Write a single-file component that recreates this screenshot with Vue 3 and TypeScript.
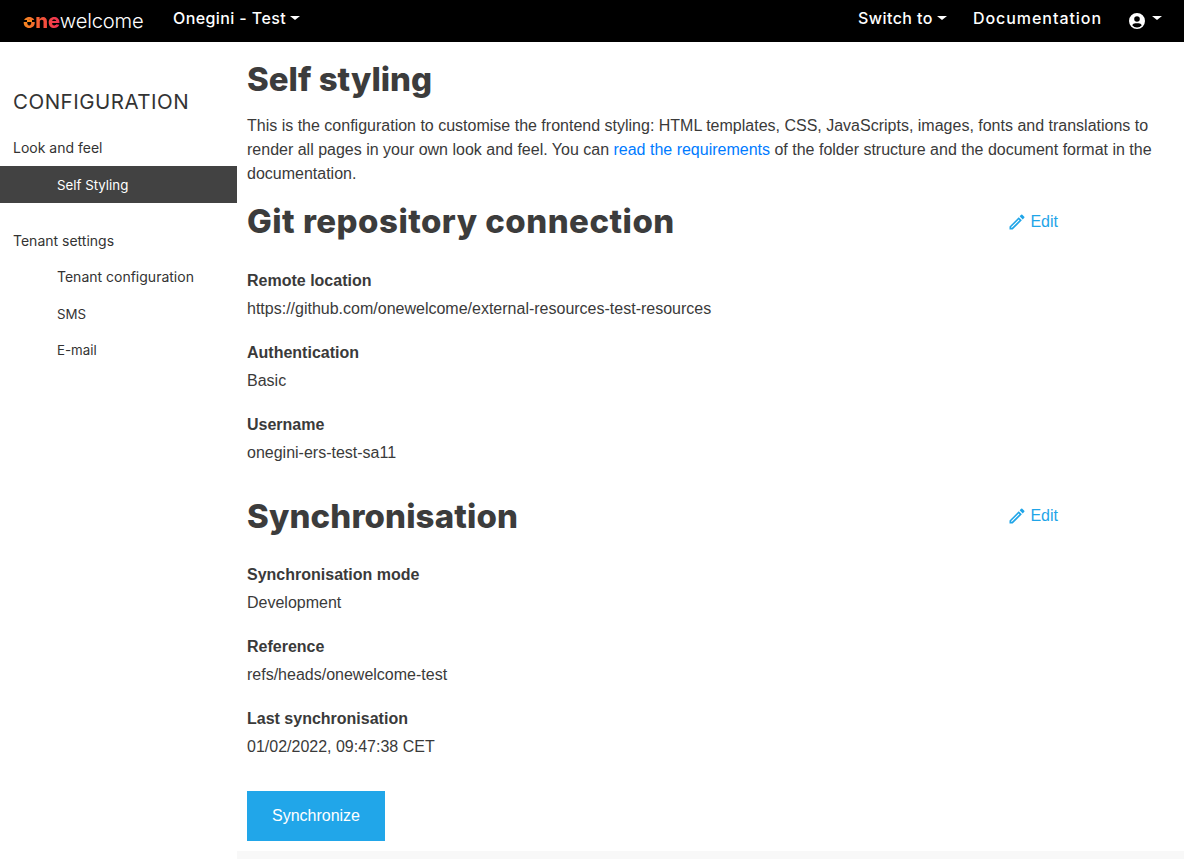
<script setup lang="ts">
interface Field { label: string; value: string }
const gitFields: Field[] = [
  { label: 'Remote location', value: 'https://github.com/onewelcome/external-resources-test-resources' },
  { label: 'Authentication', value: 'Basic' },
  { label: 'Username', value: 'onegini-ers-test-sa11' },
]
const syncFields: Field[] = [
  { label: 'Synchronisation mode', value: 'Development' },
  { label: 'Reference', value: 'refs/heads/onewelcome-test' },
  { label: 'Last synchronisation', value: '01/02/2022, 09:47:38 CET' },
]
</script>

<template>
  <div class="page">
    <header class="nav">
      <div class="brand"><span class="one">one</span><span class="welcome">welcome</span></div>
      <a class="nav-item tenant">Onegini - Test<i class="caret"></i></a>
      <div class="spacer"></div>
      <a class="nav-item switch">Switch to<i class="caret"></i></a>
      <a class="nav-item docs">Documentation</a>
      <a class="nav-item user">
        <svg class="avatar" width="18" height="18" viewBox="0 0 18 18" aria-hidden="true">
          <path fill="#fff" fill-rule="evenodd" d="M9 1a8 8 0 1 0 0 16A8 8 0 0 0 9 1Zm0 3.2a2.8 2.8 0 1 1 0 5.6 2.8 2.8 0 0 1 0-5.6Zm0 11.2a6.3 6.3 0 0 1-4.8-2.2c.6-1.2 1.8-2 3.2-2h3.2c1.4 0 2.6.8 3.2 2A6.3 6.3 0 0 1 9 15.4Z"/>
        </svg>
        <i class="caret"></i>
      </a>
    </header>

    <div class="body">
      <aside class="side">
        <div class="side-title">CONFIGURATION</div>
        <div class="group">Look and feel</div>
        <div class="item active">Self Styling</div>
        <div class="group second">Tenant settings</div>
        <div class="item wide">Tenant configuration</div>
        <div class="item">SMS</div>
        <div class="item">E-mail</div>
      </aside>

      <main class="main">
        <h1>Self styling</h1>
        <p class="intro">This is the configuration to customise the frontend styling: HTML templates, CSS, JavaScripts, images, fonts and translations to render all pages in your own look and feel. You can <a class="link">read the requirements</a> of the folder structure and the document format in the documentation.</p>

        <section class="head git">
          <h2>Git repository connection</h2>
          <a class="edit">
            <svg width="20" height="20" viewBox="0 0 24 24" aria-hidden="true"><path fill="#1fa5e8" d="M3 17.25V21h3.75L17.81 9.94l-3.75-3.75L3 17.25ZM5.92 19H5v-.92l9.06-9.06.92.92L5.92 19ZM20.71 7.04a1 1 0 0 0 0-1.41l-2.34-2.34a1 1 0 0 0-1.41 0l-1.83 1.83 3.75 3.75 1.83-1.83Z"/></svg>
            Edit
          </a>
        </section>
        <dl v-for="f in gitFields" :key="f.label" class="field">
          <dt>{{ f.label }}</dt>
          <dd>{{ f.value }}</dd>
        </dl>

        <section class="head sync">
          <h2>Synchronisation</h2>
          <a class="edit">
            <svg width="20" height="20" viewBox="0 0 24 24" aria-hidden="true"><path fill="#1fa5e8" d="M3 17.25V21h3.75L17.81 9.94l-3.75-3.75L3 17.25ZM5.92 19H5v-.92l9.06-9.06.92.92L5.92 19ZM20.71 7.04a1 1 0 0 0 0-1.41l-2.34-2.34a1 1 0 0 0-1.41 0l-1.83 1.83 3.75 3.75 1.83-1.83Z"/></svg>
            Edit
          </a>
        </section>
        <dl v-for="f in syncFields" :key="f.label" class="field">
          <dt>{{ f.label }}</dt>
          <dd>{{ f.value }}</dd>
        </dl>

        <button class="btn" type="button">Synchronize</button>
      </main>
    </div>
    <div class="foot"></div>
  </div>
</template>

<style>
html, body { margin: 0; background: #fff; }
</style>

<style scoped>
.page { height: 859px; overflow: hidden; display: flex; flex-direction: column; font-family: "Liberation Sans", Arial, sans-serif; color: #3a3a3a; }
.nav { height: 42px; background: #000; color: #fff; display: flex; align-items: center; padding: 0 22px 0 23px; font-family: Inter, sans-serif; font-size: 16px; font-weight: 500; flex: none; }
.brand { width: 150px; font-size: 20.2px; letter-spacing: -0.2px; white-space: nowrap; margin-bottom: 1px; }
.one { position: relative; font-weight: 800; background: linear-gradient(90deg, #f58a1f 0%, #f4513a 55%, #ef2f55 100%); -webkit-background-clip: text; background-clip: text; color: transparent; }
.one::before { content: ""; position: absolute; left: 0; top: 12px; width: 13px; height: 2px; background: #000; }
.one::after { content: ""; position: absolute; left: 4px; top: 12px; width: 5px; height: 2px; background: #f58a1f; }
.welcome { font-weight: 300; color: #fff; }
.spacer { flex: 1; }
.nav-item { display: flex; align-items: center; white-space: nowrap; margin-bottom: 6px; }
.tenant { letter-spacing: 0.4px; }
.switch { letter-spacing: 0.45px; }
.docs { margin-left: 26px; letter-spacing: 0.95px; }
.user { margin-left: 26px; }
.avatar { margin-top: 5px; }
.caret { display: inline-block; margin-left: 4px; border-top: 4px solid #fff; border-left: 5px solid transparent; border-right: 5px solid transparent; }
.user .caret { margin-left: 6px; }
.body { flex: 1; display: flex; min-height: 0; }
.side { width: 237px; flex: none; font-family: Inter, sans-serif; font-size: 14px; color: #333; padding-top: 47px; box-sizing: border-box; }
.side-title { font-size: 20.5px; font-weight: 400; letter-spacing: 0.5px; padding-left: 13px; line-height: 26px; margin-bottom: 14px; white-space: nowrap; }
.group { padding-left: 13px; height: 37px; line-height: 37px; }
.group.second { margin-top: 19px; }
.item { padding-left: 57px; height: 36.5px; line-height: 36.5px; font-size: 13.3px; }
.item.wide { font-size: 14px; }
.item.active { background: #424242; color: #fff; height: 37px; line-height: 38px; }
.main { flex: 1; padding-left: 10px; min-width: 0; }
h1, h2 { margin: 0; font-family: Inter, sans-serif; font-weight: 800; color: #3c3c3c; font-size: 33px; line-height: 40px; white-space: nowrap; }
h1 { padding-top: 17px; letter-spacing: 0; }
.intro { margin: 15px 0 0; font-size: 16px; line-height: 24px; width: 915px; }
.link { color: #007bff; }
.head { display: flex; align-items: center; justify-content: space-between; width: 811px; margin-top: 15px; margin-bottom: 26px; }
.head.git h2 { letter-spacing: 0.47px; }
.head.git .edit { margin-top: 2px; }
.head.sync { margin-top: 29px; margin-bottom: 25px; }
.head.sync h2 { letter-spacing: 0.13px; }
.edit { display: flex; align-items: center; gap: 3px; color: #1fa5e8; font-size: 16px; }
.field { margin: 0 0 16px; }
dt { font-weight: 700; font-size: 16px; line-height: 28px; }
dd { margin: 0; font-size: 16px; line-height: 28px; }
.btn { display: block; margin-top: 30px; width: 138px; height: 50px; border: 0; background: #21a6e9; color: #fff; font: 16px "Liberation Sans", Arial, sans-serif; }
.foot { position: absolute; left: 237px; right: 0; top: 851px; height: 8px; background: #f8f8f8; }
</style>
